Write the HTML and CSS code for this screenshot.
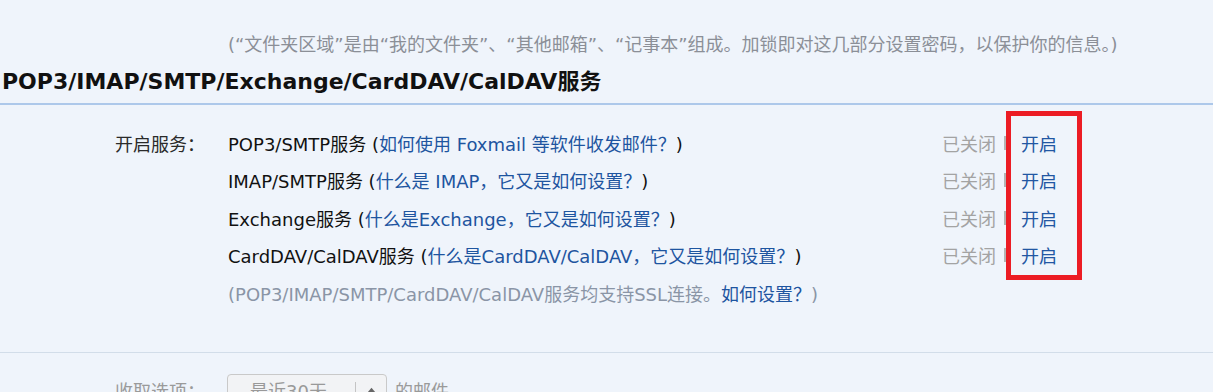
FILE: index.html
```html
<!DOCTYPE html>
<html lang="zh-CN">
<head>
<meta charset="utf-8">
<title>POP3/IMAP/SMTP/Exchange/CardDAV/CalDAV服务</title>
<link rel="stylesheet" href="styles.css">
</head>
<body>
<div class="page">
  <p class="top-note">(“文件夹区域”是由“我的文件夹”、“其他邮箱”、“记事本”组成。加锁即对这几部分设置密码，以保护你的信息。)</p>

  <h2 class="section-title">POP3/IMAP/SMTP/Exchange/CardDAV/CalDAV服务</h2>

  <div class="services">
    <div class="label">开启服务：</div>
    <div class="desc">POP3/SMTP服务 (<a class="link">如何使用 Foxmail 等软件收发邮件？</a>)</div>
    <div class="status"><span class="off">已关闭</span><span class="sep"></span><a class="on">开启</a></div>

    <div class="label"></div>
    <div class="desc">IMAP/SMTP服务 (<a class="link">什么是 IMAP，它又是如何设置？</a>)</div>
    <div class="status"><span class="off">已关闭</span><span class="sep"></span><a class="on">开启</a></div>

    <div class="label"></div>
    <div class="desc">Exchange服务 (<a class="link">什么是Exchange，它又是如何设置？</a>)</div>
    <div class="status"><span class="off">已关闭</span><span class="sep"></span><a class="on">开启</a></div>

    <div class="label"></div>
    <div class="desc">CardDAV/CalDAV服务 (<a class="link">什么是CardDAV/CalDAV，它又是如何设置？</a>)</div>
    <div class="status"><span class="off">已关闭</span><span class="sep"></span><a class="on">开启</a></div>

    <div class="label"></div>
    <div class="desc hint">(POP3/IMAP/SMTP/CardDAV/CalDAV服务均支持SSL连接。<a class="link">如何设置？</a>)</div>
    <div class="status"></div>

    <div class="highlight"></div>
  </div>

  <div class="fetch-row">
    <div class="label muted">收取选项：</div>
    <div class="select">
      <span class="select-value">最近30天</span>
      <span class="select-arrow"><svg width="9" height="6" viewBox="0 0 9 6"><path d="M0.5 5.5 L4.5 0.8 L8.5 5.5 Z" fill="#666"/></svg></span>
    </div>
    <span class="after muted">的邮件</span>
  </div>
</div>
</body>
</html>
```

FILE: styles.css
```css
html, body {
  margin: 0;
  padding: 0;
}

body {
  background: #eff4fb;
  font-family: "DejaVu Sans", "Noto Sans CJK SC", sans-serif;
  font-size: 18px;
  color: #111;
  overflow: hidden;
}

.page {
  width: 1213px;
  height: 392px;
  overflow: hidden;
}

.top-note {
  margin: 0;
  padding: 27px 0 0 228px;
  line-height: 36px;
  color: #8b8f97;
  font-size: 18px;
  white-space: nowrap;
}

.section-title {
  margin: 4px 0 0 0;
  padding: 0 0 6px 2px;
  font-size: 22px;
  line-height: 30px;
  font-weight: bold;
  color: #111;
  border-bottom: 2px solid #adc8ea;
  white-space: nowrap;
}

.services {
  position: relative;
  display: grid;
  grid-template-columns: 113px 714px auto;
  grid-auto-rows: 37.5px;
  align-items: center;
  padding: 19px 0 40px 115px;
  border-bottom: 1px solid #d2dde9;
}

.label {
  color: #2a2a2a;
  white-space: nowrap;
}

.desc {
  white-space: nowrap;
  color: #111;
}

.link {
  color: #1e55a0;
  text-decoration: none;
}

.hint {
  color: #8a95a6;
}

.status {
  display: flex;
  align-items: center;
  white-space: nowrap;
}

.off {
  color: #a3a3a3;
}

.sep {
  display: inline-block;
  width: 3px;
  height: 14px;
  background: #b4b4b4;
  margin: 0 14px 0 8px;
}

.on {
  color: #2257a3;
  text-decoration: none;
}

.highlight {
  position: absolute;
  left: 1006px;
  top: 6px;
  width: 66px;
  height: 159px;
  border: 5px solid #ec1c24;
}

.fetch-row {
  display: flex;
  align-items: center;
  padding: 21px 0 0 115px;
}

.fetch-row .label {
  width: 112px;
}

.muted {
  color: #9a9a9a;
}

.select {
  display: flex;
  align-items: center;
  width: 160px;
  height: 32px;
  border: 1px solid #c9c9c9;
  border-radius: 4px;
  background: #f2f3f5;
  box-sizing: border-box;
}

.select-value {
  flex: 1;
  padding-left: 22px;
  color: #999;
}

.select-arrow {
  display: flex;
  align-items: center;
  justify-content: center;
  width: 30px;
  height: 16px;
  border-left: 1px solid #c4c4c4;
}

.after {
  margin-left: 8px;
}
```
